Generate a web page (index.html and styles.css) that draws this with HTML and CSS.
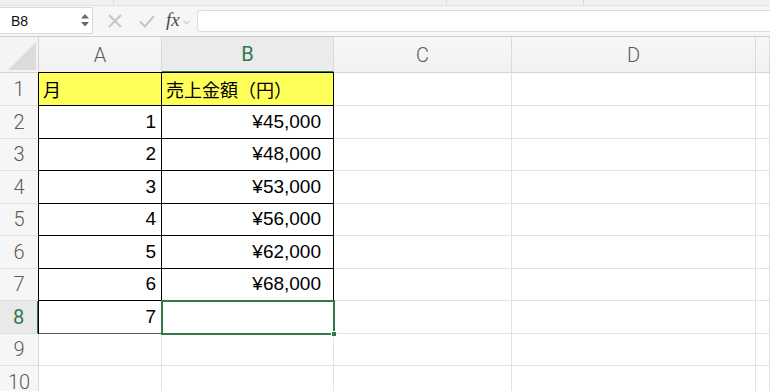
FILE: index.html
```html
<!DOCTYPE html>
<html lang="ja">
<head>
<meta charset="utf-8">
<title>Book1</title>
<link rel="stylesheet" href="styles.css">
</head>
<body>
<div class="app">
  <div class="ribbon-edge">
    <div class="group g1"></div>
    <div class="group g2"></div>
    <div class="group g3"></div>
    <div class="group g4"></div>
  </div>

  <div class="formula-bar">
    <div class="name-box">
      <span class="name">B8</span>
      <span class="spinner">
        <svg width="8" height="13" viewBox="0 0 8 13"><polygon points="4,0 8,4.5 0,4.5" fill="#6a6a6a"/><polygon points="0,8 8,8 4,12.5" fill="#6a6a6a"/></svg>
      </span>
    </div>
    <div class="fx-tools">
      <svg class="tool" width="16" height="16" viewBox="0 0 16 16"><path d="M2 2 L14 14 M14 2 L2 14" stroke="#c6c6c6" stroke-width="2" fill="none"/></svg>
      <svg class="tool" width="16" height="16" viewBox="0 0 16 16"><path d="M1 8.5 L6 13.5 L15 3" stroke="#c6c6c6" stroke-width="2" fill="none"/></svg>
      <span class="fx">fx</span>
      <svg class="chev" width="7" height="5" viewBox="0 0 7 5"><path d="M0.5 0.8 L3.5 4 L6.5 0.8" stroke="#b5b5b5" stroke-width="1" fill="none"/></svg>
    </div>
    <div class="formula-input"></div>
  </div>

  <div class="sheet">
    <div class="corner"><svg width="28" height="28" viewBox="0 0 28 28"><polygon points="0,28 28,28 28,0" fill="#dcdcdc"/></svg></div>
    <div class="col-h">A</div>
    <div class="col-h active">B</div>
    <div class="col-h">C</div>
    <div class="col-h">D</div>
    <div class="col-h"></div>

    <div class="row-h">1</div>
    <div class="cell bd left top fill">月</div>
    <div class="cell bd top fill">売上金額（円）</div>
    <div class="cell"></div><div class="cell"></div><div class="cell"></div>

    <div class="row-h">2</div>
    <div class="cell bd left num">1</div>
    <div class="cell bd num yen">¥45,000</div>
    <div class="cell"></div><div class="cell"></div><div class="cell"></div>

    <div class="row-h">3</div>
    <div class="cell bd left num">2</div>
    <div class="cell bd num yen">¥48,000</div>
    <div class="cell"></div><div class="cell"></div><div class="cell"></div>

    <div class="row-h">4</div>
    <div class="cell bd left num">3</div>
    <div class="cell bd num yen">¥53,000</div>
    <div class="cell"></div><div class="cell"></div><div class="cell"></div>

    <div class="row-h">5</div>
    <div class="cell bd left num">4</div>
    <div class="cell bd num yen">¥56,000</div>
    <div class="cell"></div><div class="cell"></div><div class="cell"></div>

    <div class="row-h">6</div>
    <div class="cell bd left num">5</div>
    <div class="cell bd num yen">¥62,000</div>
    <div class="cell"></div><div class="cell"></div><div class="cell"></div>

    <div class="row-h">7</div>
    <div class="cell bd left num">6</div>
    <div class="cell bd num yen">¥68,000</div>
    <div class="cell"></div><div class="cell"></div><div class="cell"></div>

    <div class="row-h active">8</div>
    <div class="cell bd soft left num">7</div>
    <div class="cell bd"></div>
    <div class="cell"></div><div class="cell"></div><div class="cell"></div>

    <div class="row-h">9</div>
    <div class="cell"></div><div class="cell"></div><div class="cell"></div><div class="cell"></div><div class="cell"></div>

    <div class="row-h">10</div>
    <div class="cell"></div><div class="cell"></div><div class="cell"></div><div class="cell"></div><div class="cell"></div>

    <div class="selection"><span class="handle"></span></div>
  </div>
</div>
</body>
</html>
```

FILE: styles.css
```css
* { box-sizing: border-box; }

html, body {
  margin: 0;
  padding: 0;
  background: #ffffff;
}

body {
  width: 770px;
  height: 391px;
  overflow: hidden;
  font-family: "Liberation Sans", "Noto Sans CJK JP", sans-serif;
  color: #000;
}

.app {
  display: flex;
  flex-direction: column;
  width: 770px;
  height: 391px;
}

/* bottom edge of the ribbon */
.ribbon-edge {
  display: flex;
  height: 6px;
  background: #f1f1f1;
  border-bottom: 1px solid #e2e2e2;
}
.group { height: 4px; border-right: 1px solid #d6d6d6; }
.g1 { width: 114px; }
.g2 { width: 333px; }
.g3 { width: 137px; }
.g4 { flex: 1; border-right: none; }

/* formula bar */
.formula-bar {
  display: flex;
  align-items: stretch;
  height: 31px;
  background: #f6f6f6;
  border-bottom: 1px solid #cdcdcd;
}

.name-box {
  width: 93px;
  margin: 1px 0 2px 0;
  background: #fff;
  border: 1px solid #dadada;
  border-left: none;
  display: flex;
  align-items: center;
  justify-content: space-between;
  padding: 0 3px 0 11px;
}
.name {
  font-family: "Liberation Sans", sans-serif;
  font-size: 14px;
  color: #111;
}
.spinner { display: flex; align-items: center; }

.fx-tools {
  display: flex;
  align-items: center;
  width: 104px;
  padding-left: 14px;
}
.tool { margin-right: 16px; }
.fx {
  font-family: "Liberation Serif", serif;
  font-style: italic;
  font-size: 19px;
  color: #4a4a4a;
  margin-left: -5px;
  margin-top: -2px;
}
.chev { margin-left: 3px; margin-top: 2px; }

.formula-input {
  flex: 1;
  margin: 4px 0 4px 0;
  background: #fff;
  border: 1px solid #dcdcdc;
  border-right: none;
  border-radius: 4px 0 0 4px;
}

/* worksheet grid */
.sheet {
  position: relative;
  flex: 1;
  display: grid;
  grid-template-columns: 39px 123px 172px 178px 244px 1fr;
  grid-template-rows: 36px 33px 33px 32px 33px 32px 33px 32px 33px 32px 33px;
  overflow: hidden;
}

.corner {
  background: #f4f4f4;
  border-right: 1px solid #d4d4d4;
  border-bottom: 1px solid #d4d4d4;
  display: flex;
  align-items: flex-end;
  justify-content: flex-end;
  padding: 0 2px 2px 0;
}

.col-h {
  background: linear-gradient(#f7f7f7, #f1f1f1);
  border-right: 1px solid #dadada;
  border-bottom: 1px solid #d4d4d4;
  display: flex;
  align-items: center;
  justify-content: center;
  font-family: "Roboto", "Liberation Sans", sans-serif;
  font-weight: 300;
  font-size: 20px;
  color: #5a5a5a;
}
.col-h.active {
  background: #ebebeb;
  color: #2f7a46;
  font-weight: 400;
  border-bottom: 2px solid #2f7a46;
}

.row-h {
  background: #f6f6f6;
  border-right: 1px solid #d6d6d6;
  border-bottom: 1px solid #e0e0e0;
  display: flex;
  align-items: center;
  justify-content: center;
  font-family: "Roboto", "Liberation Sans", sans-serif;
  font-weight: 300;
  font-size: 20px;
  color: #5a5a5a;
  padding-bottom: 1px;
}
.row-h.active {
  background: #e9e9e9;
  color: #2f7a46;
  font-weight: 400;
  border-right: 2px solid #2f7a46;
}

.cell {
  background: #fff;
  border-right: 1px solid #e1e1e1;
  border-bottom: 1px solid #e1e1e1;
  display: flex;
  align-items: center;
  font-size: 19px;
  padding: 0 5px 1px 5px;
  white-space: nowrap;
}

/* bordered data range */
.cell.bd { border-right-color: #000; border-bottom-color: #000; }
.cell.bd.soft { border-bottom-color: #555; }
.cell.bd.left { box-shadow: -1px 0 0 #000; }
.cell.bd.top { box-shadow: 0 -1px 0 #000; }
.cell.bd.left.top { box-shadow: -1px 0 0 #000, 0 -1px 0 #000, -1px -1px 0 #000; }

.cell.fill {
  background: #ffff5a;
  font-family: "Noto Sans CJK JP", "Liberation Sans", sans-serif;
  font-size: 18px;
  padding-left: 4px;
}

.cell.num { justify-content: flex-end; }
.cell.yen { padding-right: 12px; }

/* active cell B8 */
.selection {
  position: absolute;
  left: 161px;
  top: 263px;
  width: 174px;
  height: 35px;
  border: 2px solid #2f7a46;
}
.handle {
  position: absolute;
  right: -4px;
  bottom: -4px;
  width: 6px;
  height: 6px;
  background: #2f7a46;
  border: 1px solid #fff;
}
```
